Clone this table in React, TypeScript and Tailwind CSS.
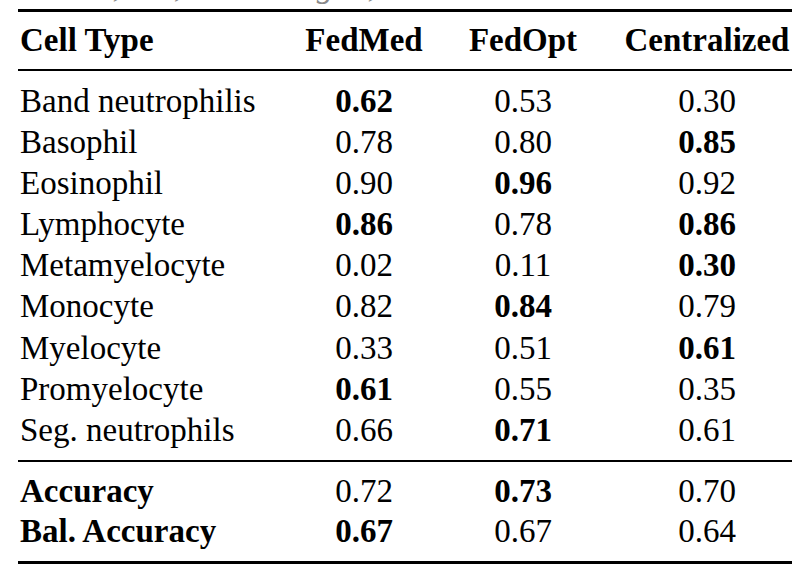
import React from 'react';

type Row = { name: string; vals: string[]; best: number[] };

const rows: Row[] = [
  { name: 'Band neutrophilis', vals: ['0.62', '0.53', '0.30'], best: [0] },
  { name: 'Basophil', vals: ['0.78', '0.80', '0.85'], best: [2] },
  { name: 'Eosinophil', vals: ['0.90', '0.96', '0.92'], best: [1] },
  { name: 'Lymphocyte', vals: ['0.86', '0.78', '0.86'], best: [0, 2] },
  { name: 'Metamyelocyte', vals: ['0.02', '0.11', '0.30'], best: [2] },
  { name: 'Monocyte', vals: ['0.82', '0.84', '0.79'], best: [1] },
  { name: 'Myelocyte', vals: ['0.33', '0.51', '0.61'], best: [2] },
  { name: 'Promyelocyte', vals: ['0.61', '0.55', '0.35'], best: [0] },
  { name: 'Seg. neutrophils', vals: ['0.66', '0.71', '0.61'], best: [1] },
];

const summary: Row[] = [
  { name: 'Accuracy', vals: ['0.72', '0.73', '0.70'], best: [1] },
  { name: 'Bal. Accuracy', vals: ['0.67', '0.67', '0.64'], best: [0] },
];

const cols = 'grid grid-cols-[286px_120px_198px_170px]';

function TableRow({ row, boldName = false, lh }: { row: Row; boldName?: boolean; lh: string }) {
  return (
    <div className={`${cols} ${lh}`}>
      <div className={`pl-[2px] whitespace-nowrap ${boldName ? 'font-bold' : ''}`}>{row.name}</div>
      {row.vals.map((v, i) => (
        <div key={i} className={`text-center ${row.best.includes(i) ? 'font-bold' : ''}`}>
          {v}
        </div>
      ))}
    </div>
  );
}

export default function App() {
  return (
    <div className="w-[806px] h-[582px] bg-white overflow-hidden text-black font-['Liberation_Serif',serif] text-[33px]">
      {/* caption above, cut off by the crop */}
      <div className="h-[9px] overflow-hidden">
        <div className="flex -mt-[30px] leading-none italic text-[#8a8a8a] whitespace-nowrap">
          <span className="ml-[100px]">s,</span>
          <span className="ml-[40px]">s,</span>
          <span className="ml-[118px]">ag</span>
          <span className="ml-[20px]">e,</span>
        </div>
      </div>

      <div className="ml-[18px] w-[774px]">
        <div className="h-[3px] bg-black" />
        <div className={`${cols} leading-[57px] font-bold`}>
          <div className="pl-[2px]">Cell Type</div>
          <div className="text-center">FedMed</div>
          <div className="text-center">FedOpt</div>
          <div className="text-center">Centralized</div>
        </div>
        <div className="h-[2px] bg-black" />

        <div className="pt-[10px] pb-[9px]">
          {rows.map((r) => (
            <TableRow key={r.name} row={r} lh="leading-[41.1px]" />
          ))}
        </div>
        <div className="h-[2px] bg-black" />

        <div className="pt-[9px] pb-[10px]">
          {summary.map((r) => (
            <TableRow key={r.name} row={r} boldName lh="leading-[40px]" />
          ))}
        </div>
        <div className="h-[3px] bg-black" />
      </div>
    </div>
  );
}
